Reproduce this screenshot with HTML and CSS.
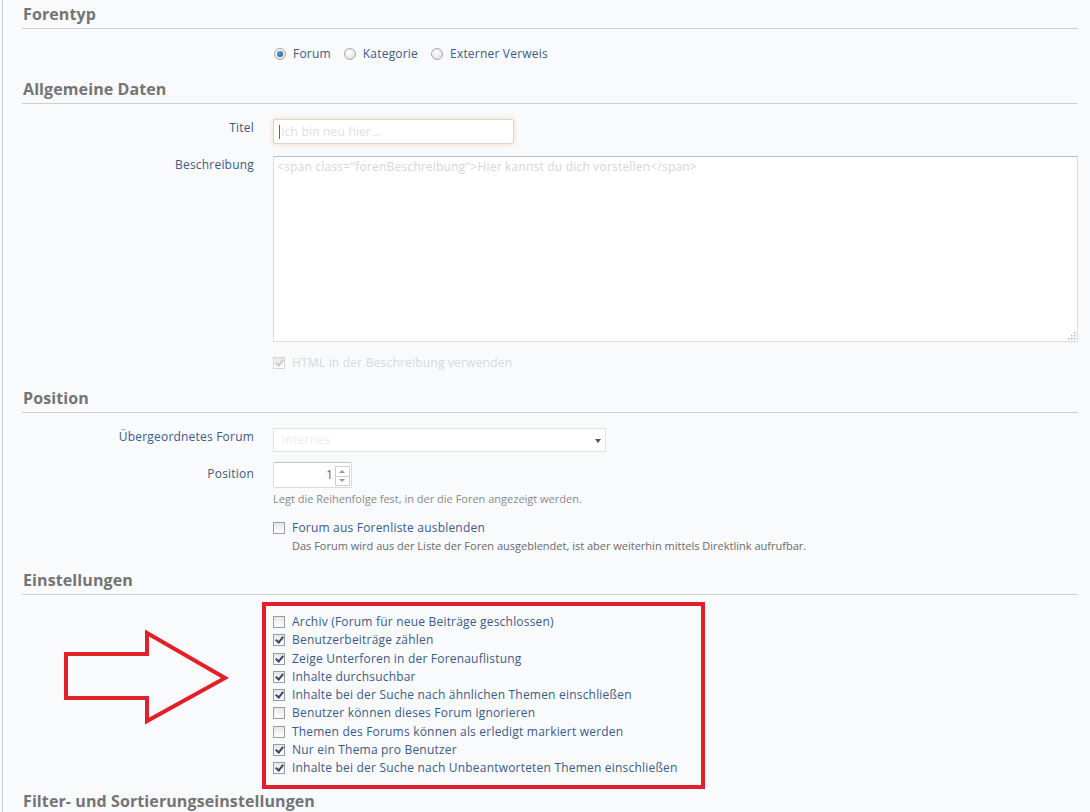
FILE: index.html
```html
<!DOCTYPE html>
<html lang="de">
<head>
  <meta charset="UTF-8">
  <title>Forum bearbeiten</title>
  <link rel="stylesheet" href="styles.css">
</head>
<body>
  <div class="page">

    <section class="sec">
      <h2>Forentyp</h2>
      <div class="row row-radios">
        <div class="lbl"></div>
        <div class="field radios">
          <label class="opt"><span class="radio on"></span>Forum</label>
          <label class="opt"><span class="radio"></span>Kategorie</label>
          <label class="opt"><span class="radio"></span>Externer Verweis</label>
        </div>
      </div>
    </section>

    <section class="sec">
      <h2>Allgemeine Daten</h2>
      <div class="row row-title">
        <div class="lbl">Titel</div>
        <div class="field">
          <div class="input input-title"><span class="caret"></span>Ich bin neu hier...</div>
        </div>
      </div>
      <div class="row row-desc">
        <div class="lbl">Beschreibung</div>
        <div class="field">
          <div class="textarea">
            &lt;span class="forenBeschreibung"&gt;Hier kannst du dich vorstellen&lt;/span&gt;
            <svg class="grip" width="9" height="9" viewBox="0 0 9 9">
              <rect x="7" y="1" width="1.5" height="1.5" fill="#b5b5b5"/>
              <rect x="4" y="4" width="1.5" height="1.5" fill="#b5b5b5"/>
              <rect x="7" y="4" width="1.5" height="1.5" fill="#b5b5b5"/>
              <rect x="1" y="7" width="1.5" height="1.5" fill="#b5b5b5"/>
              <rect x="4" y="7" width="1.5" height="1.5" fill="#b5b5b5"/>
              <rect x="7" y="7" width="1.5" height="1.5" fill="#b5b5b5"/>
            </svg>
          </div>
        </div>
      </div>
      <div class="row row-html">
        <div class="lbl"></div>
        <div class="field">
          <label class="check faded"><span class="cb on"></span>HTML in der Beschreibung verwenden</label>
        </div>
      </div>
    </section>

    <section class="sec">
      <h2>Position</h2>
      <div class="row row-parent">
        <div class="lbl">Übergeordnetes Forum</div>
        <div class="field">
          <div class="select">Internes<span class="arrow"></span></div>
        </div>
      </div>
      <div class="row row-pos">
        <div class="lbl lbl-pos">Position</div>
        <div class="field">
          <div class="number">1<span class="spin"><span class="up"></span><span class="down"></span></span></div>
          <p class="help">Legt die Reihenfolge fest, in der die Foren angezeigt werden.</p>
        </div>
      </div>
      <div class="row row-hide">
        <div class="lbl"></div>
        <div class="field">
          <label class="check"><span class="cb"></span>Forum aus Forenliste ausblenden</label>
          <p class="desc">Das Forum wird aus der Liste der Foren ausgeblendet, ist aber weiterhin mittels Direktlink aufrufbar.</p>
        </div>
      </div>
    </section>

    <section class="sec">
      <h2>Einstellungen</h2>
      <div class="row row-settings">
        <div class="lbl lbl-arrow">
          <svg width="170" height="98" viewBox="0 0 170 98">
            <polygon points="4,25 85,25 85,4 163,49 85,92 85,69 4,69" fill="none" stroke="#e2202a" stroke-width="4" stroke-linejoin="miter"/>
          </svg>
        </div>
        <div class="field">
          <div class="marked">
            <label class="check"><span class="cb"></span>Archiv (Forum für neue Beiträge geschlossen)</label>
            <label class="check"><span class="cb on"></span>Benutzerbeiträge zählen</label>
            <label class="check"><span class="cb on"></span>Zeige Unterforen in der Forenauflistung</label>
            <label class="check"><span class="cb on"></span>Inhalte durchsuchbar</label>
            <label class="check"><span class="cb on"></span>Inhalte bei der Suche nach ähnlichen Themen einschließen</label>
            <label class="check"><span class="cb"></span>Benutzer können dieses Forum ignorieren</label>
            <label class="check"><span class="cb"></span>Themen des Forums können als erledigt markiert werden</label>
            <label class="check"><span class="cb on"></span>Nur ein Thema pro Benutzer</label>
            <label class="check"><span class="cb on"></span>Inhalte bei der Suche nach Unbeantworteten Themen einschließen</label>
          </div>
        </div>
      </div>
    </section>

    <section class="sec sec-filter">
      <h2>Filter- und Sortierungseinstellungen</h2>
    </section>

  </div>
</body>
</html>
```

FILE: styles.css
```css
html, body {
  margin: 0;
  background: #f9fafc;
}
body {
  font-family: "Open Sans", "DejaVu Sans", sans-serif;
  font-size: 12px;
  letter-spacing: 0.2px;
  color: #3a5a88;
  overflow: hidden;
}
.page {
  margin-left: 2px;
  border-left: 1px solid #cfcfcf;
  padding: 0 12px 0 19px;
  min-height: 812px;
}
h2 {
  margin: 0;
  padding: 4px 1px 4px;
  line-height: 20px;
  font-size: 16px;
  font-weight: bold;
  letter-spacing: 0.1px;
  color: #747474;
  border-bottom: 1px solid #d0d0d0;
}
.sec + .sec {
  margin-top: 13px;
}
.sec.sec-filter {
  margin-top: -2px;
}
.row {
  display: grid;
  grid-template-columns: 232px 1fr;
  column-gap: 19px;
}
.lbl {
  text-align: right;
  line-height: 16px;
  padding-top: 1px;
}

/* radios */
.row-radios {
  margin-top: 17px;
}
.radios {
  display: flex;
  gap: 12px;
  line-height: 16px;
}
.opt {
  display: flex;
  align-items: center;
}
.radio {
  width: 10px;
  height: 10px;
  border: 1px solid #a9a9a9;
  border-radius: 50%;
  background: radial-gradient(circle at 40% 35%, #ffffff, #dcdcdc);
  margin: 0 7px 0 1px;
  position: relative;
}
.radio.on::after {
  content: "";
  position: absolute;
  left: 2px;
  top: 2px;
  width: 6px;
  height: 6px;
  border-radius: 50%;
  background: radial-gradient(circle at 40% 35%, #5fa3d6, #0b4f86);
}

/* inputs */
.row-title {
  margin-top: 15px;
}
.input {
  box-sizing: border-box;
  height: 25px;
  border: 1px solid #d9d6d2;
  border-radius: 2px;
  background: #ffffff;
  box-shadow: 0 0 5px rgba(250, 190, 140, 0.6);
  color: #e0e0e0;
  line-height: 23px;
  padding: 0 5px;
  display: flex;
  align-items: center;
}
.input-title {
  width: 241px;
}
.caret {
  width: 1px;
  height: 14px;
  background: #666;
  margin-right: 1px;
}
.row-desc {
  margin-top: 12px;
}
.textarea {
  box-sizing: border-box;
  height: 186px;
  border: 1px solid #dcdcdc;
  border-top-color: #bdbdbd;
  background: #ffffff;
  color: #d6d6d6;
  padding: 2px 3px;
  line-height: 16px;
  position: relative;
}
.grip {
  position: absolute;
  right: 1px;
  bottom: 1px;
}
.row-html {
  margin-top: 13px;
}

/* checkboxes */
.check {
  display: flex;
  align-items: center;
  line-height: 16px;
}
.cb {
  box-sizing: border-box;
  width: 12px;
  height: 12px;
  border: 1px solid #9c9c9c;
  background: linear-gradient(#e6e6e6, #ffffff);
  margin: 0 7px 0 0;
  flex: none;
  position: relative;
}
.cb.on::after {
  content: "";
  position: absolute;
  left: 3px;
  top: 0px;
  width: 3px;
  height: 6px;
  border: solid #34466a;
  border-width: 0 2px 2px 0;
  transform: rotate(40deg);
}
.check.faded {
  color: #d4d9e0;
}
.check.faded .cb {
  border-color: #d8d8d8;
}
.check.faded .cb.on::after {
  border-color: #c9c9c9;
}

/* position */
.row-parent {
  margin-top: 15px;
}
.select {
  box-sizing: border-box;
  width: 333px;
  height: 24px;
  border: 1px solid #e2e2e2;
  background: #ffffff;
  color: #ececec;
  line-height: 22px;
  padding: 0 8px;
  position: relative;
}
.arrow {
  position: absolute;
  right: 4px;
  top: 10px;
  border: 3px solid transparent;
  border-top: 4px solid #555;
}
.row-pos {
  margin-top: 10px;
}
.lbl-pos {
  padding-top: 4px;
}
.number {
  box-sizing: border-box;
  width: 79px;
  height: 26px;
  border: 1px solid #dadada;
  border-top-color: #c4c4c4;
  border-radius: 2px;
  background: #ffffff;
  color: #666;
  line-height: 24px;
  text-align: right;
  padding-right: 18px;
  position: relative;
}
.spin {
  position: absolute;
  right: 1px;
  top: 3px;
  width: 13px;
  height: 18px;
  border: 1px solid #d0d0d0;
  display: flex;
  flex-direction: column;
}
.spin span {
  flex: 1;
  position: relative;
}
.spin .up {
  border-bottom: 1px solid #d0d0d0;
}
.spin .up::after,
.spin .down::after {
  content: "";
  position: absolute;
  left: 3px;
  border: 3px solid transparent;
}
.spin .up::after {
  top: 0;
  border-bottom: 3px solid #9a9a9a;
}
.spin .down::after {
  top: 2px;
  border-top: 3px solid #9a9a9a;
}
.help {
  margin: 4px 0 0;
  font-size: 11px;
  letter-spacing: 0;
  line-height: 14px;
  color: #8a8a8a;
}
.row-hide {
  margin-top: 14px;
}
.desc {
  margin: 3px 0 0 19px;
  font-size: 11px;
  letter-spacing: 0;
  line-height: 14px;
  color: #6a6a6a;
}

/* settings list with the red frame */
.row-settings {
  margin-top: 7px;
}
.lbl-arrow {
  text-align: left;
  padding: 27px 0 0 40px;
}
.lbl-arrow svg {
  display: block;
}
.marked {
  box-sizing: border-box;
  width: 443px;
  margin-left: -11px;
  border: 4px solid #e2202a;
  padding: 7px 0 8px 7px;
}
.marked .check {
  height: 18.25px;
  line-height: 18.25px;
}
```
